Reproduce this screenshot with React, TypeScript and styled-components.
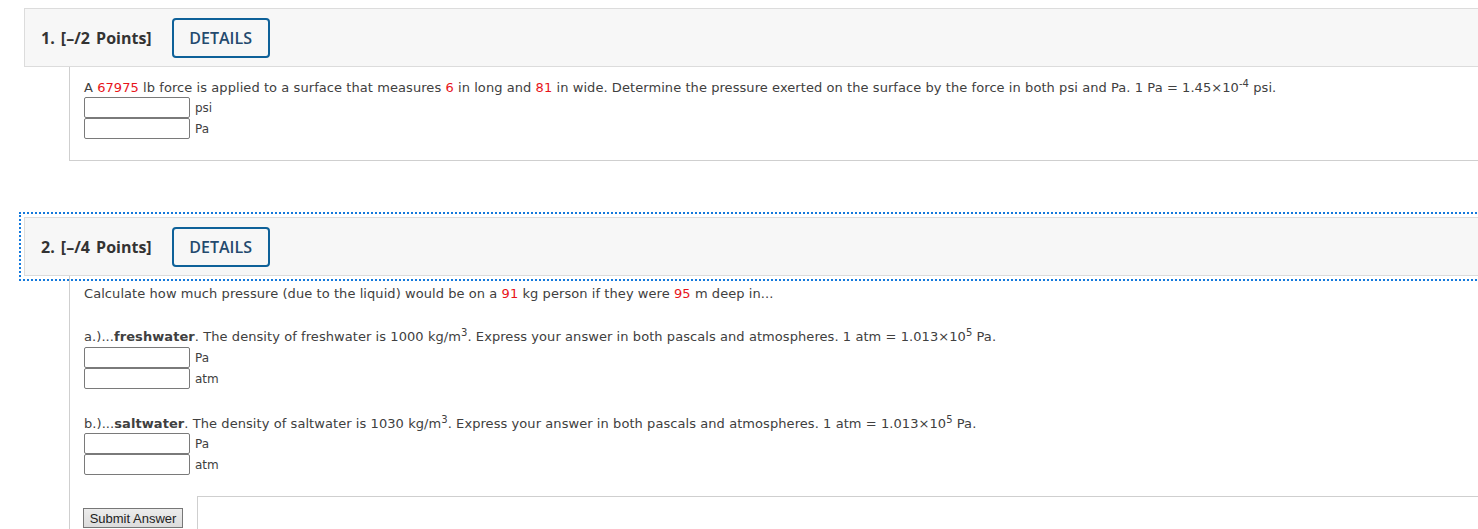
import React from "react";
import styled, { createGlobalStyle } from "styled-components";

const Global = createGlobalStyle`
  html, body { margin: 0; padding: 0; background: #fff; overflow: hidden; }
  body { width: 1478px; height: 529px; }
`;

const Page = styled.div`
  padding-top: 8px;
  padding-left: 24px;
  width: 1500px;
`;

const Question = styled.section<{ $gapTop?: number }>`
  margin-top: ${(p) => p.$gapTop ?? 0}px;
`;

const Header = styled.div<{ $focused?: boolean }>`
  display: flex;
  align-items: center;
  height: 57px;
  padding-left: 16px;
  background: #f7f7f7;
  border: 1px solid #dcdcdc;
  box-sizing: content-box;
  outline: ${(p) => (p.$focused ? "2px dotted #1479dc" : "none")};
  outline-offset: 3px;
`;

const Title = styled.span`
  font-family: "Open Sans", sans-serif;
  font-weight: 700;
  font-size: 16px;
  color: #333;
  margin-right: 20px;
  word-spacing: 2px;
`;

const DetailsButton = styled.button`
  width: 98px;
  height: 40px;
  border: 2px solid #0e6199;
  border-radius: 4px;
  background: transparent;
  font-family: "Open Sans", sans-serif;
  font-weight: 600;
  font-size: 16px;
  color: #244a6e;
  padding: 0;
`;

const Body = styled.div<{ $padTop: number; $bottom?: boolean }>`
  margin-left: 45px;
  border-left: 1px solid #cfcfcf;
  border-bottom: ${(p) => (p.$bottom ? "1px solid #cfcfcf" : "none")};
  padding: ${(p) => p.$padTop}px 0 ${(p) => (p.$bottom ? 21 : 0)}px 14px;
  font-family: "DejaVu Sans", Verdana, sans-serif;
  font-size: 13px;
  color: #404040;
`;

const Para = styled.div<{ $mt?: number }>`
  line-height: 16px;
  margin-top: ${(p) => p.$mt ?? 0}px;
  letter-spacing: 0.07px;
  white-space: nowrap;
`;

const Red = styled.span`
  color: #e8141b;
`;

const Sup = styled.sup`
  font-size: 10px;
  line-height: 0;
  vertical-align: 5px;
`;

const Answers = styled.div<{ $mt?: number }>`
  display: flex;
  flex-direction: column;
  margin-top: ${(p) => p.$mt ?? 1}px;
`;

const AnswerRow = styled.label`
  display: flex;
  align-items: center;
  gap: 5px;
`;

const Field = styled.input`
  width: 106px;
  height: 21px;
  box-sizing: border-box;
  border: 1px solid #7a7a7a;
  border-radius: 2px;
  margin: 0;
  padding: 0;
  background: #fff;
`;

const Unit = styled.span`
  font-family: "DejaVu Sans", Verdana, sans-serif;
  font-size: 12px;
  line-height: 16px;
  color: #404040;
`;

const Footer = styled.div`
  display: flex;
  align-items: flex-start;
  gap: 14px;
  margin-top: 21px;
  margin-left: -1px;
`;

const Submit = styled.button`
  margin-top: 12px;
  width: 100px;
  height: 20px;
  box-sizing: border-box;
  padding: 0;
  border: 1px solid #777;
  background: linear-gradient(#ececec, #dcdcdc);
  font-family: "Liberation Sans", Arial, sans-serif;
  font-size: 13px;
  color: #222;
  border-radius: 0;
`;

const SaveBox = styled.div`
  flex: 1;
  height: 60px;
  border: 1px solid #cfcfcf;
  border-right: none;
`;

const Answer = ({ unit }: { unit: string }) => (
  <AnswerRow>
    <Field type="text" />
    <Unit>{unit}</Unit>
  </AnswerRow>
);

export default function App() {
  return (
    <>
      <Global />
      <Page>
        <Question>
          <Header>
            <Title>1. [–/2 Points]</Title>
            <DetailsButton>DETAILS</DetailsButton>
          </Header>
          <Body $padTop={13} $bottom>
            <Para>
              A <Red>67975</Red> lb force is applied to a surface that measures <Red>6</Red> in long and{" "}
              <Red>81</Red> in wide. Determine the pressure exerted on the surface by the force in both psi and
              Pa. 1 Pa = 1.45×10<Sup>-4</Sup> psi.
            </Para>
            <Answers>
              <Answer unit="psi" />
              <Answer unit="Pa" />
            </Answers>
          </Body>
        </Question>
        <Question $gapTop={56}>
          <Header $focused>
            <Title>2. [–/4 Points]</Title>
            <DetailsButton>DETAILS</DetailsButton>
          </Header>
          <Body $padTop={10}>
            <Para>
              Calculate how much pressure (due to the liquid) would be on a <Red>91</Red> kg person if they were{" "}
              <Red>95</Red> m deep in...
            </Para>
            <Para $mt={27}>
              a.)...<b>freshwater</b>. The density of freshwater is 1000 kg/m<Sup>3</Sup>. Express your answer in
              both pascals and atmospheres. 1 atm = 1.013×10<Sup>5</Sup> Pa.
            </Para>
            <Answers $mt={2}>
              <Answer unit="Pa" />
              <Answer unit="atm" />
            </Answers>
            <Para $mt={27}>
              b.)...<b>saltwater</b>. The density of saltwater is 1030 kg/m<Sup>3</Sup>. Express your answer in
              both pascals and atmospheres. 1 atm = 1.013×10<Sup>5</Sup> Pa.
            </Para>
            <Answers>
              <Answer unit="Pa" />
              <Answer unit="atm" />
            </Answers>
            <Footer>
              <Submit>Submit Answer</Submit>
              <SaveBox />
            </Footer>
          </Body>
        </Question>
      </Page>
    </>
  );
}
